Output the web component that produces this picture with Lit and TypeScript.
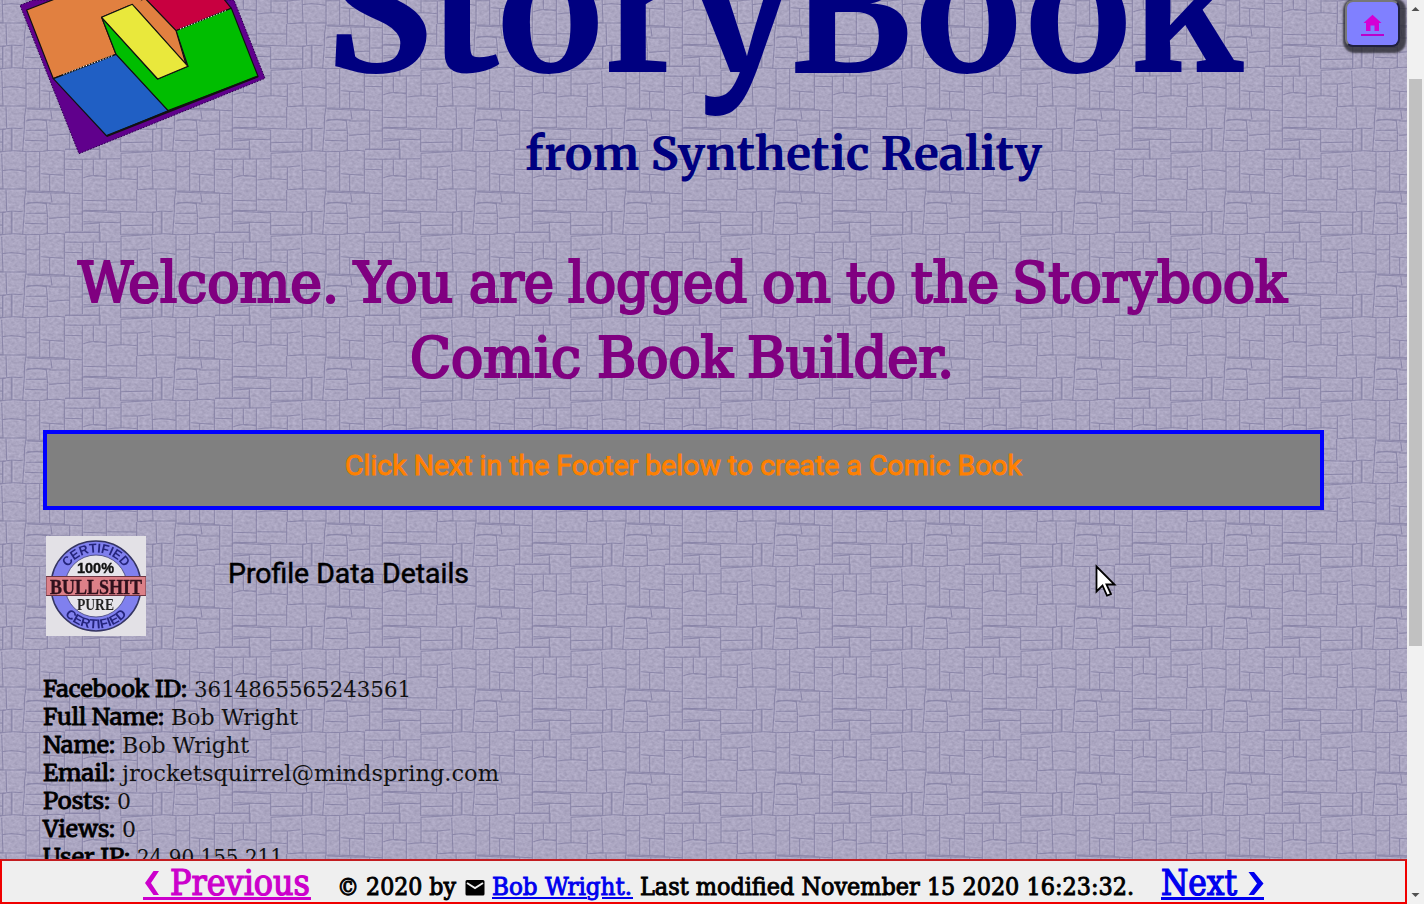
import { LitElement, html, svg, css, unsafeCSS } from "lit";
import { customElement } from "lit/decorators.js";

/* One paving tile: 450 x 249 drawing units, shown at 150 x 83 px. */
const joints = [
  "M0 81Q40 74 78 80L130 79Q160 72 195 79", "M5 137Q40 131 76 139", "M78 82L78 194", "M80 125H118", "M78 197L192 201", "M119 80V199",
  "M122 146L190 151", "M149 150V197", "M193 78V203", "M195 73H300V102", "M195 102L250 103L360 101", "M195 133L246 134", "M195 203L248 207",
  "M247 103V256", "M280 103V150", "M283 153L318 152", "M250 158Q280 146 317 156", "M319 102V258", "M250 226L317 228", "M250 256L317 257",
  "M322 165Q365 158 410 164", "M363 88V160", "M365 126L412 126L450 122", "M412 127V194", "M322 224L408 225", "M410 195V258",
  "M322 258L410 261L467 262", "M413 194L458 191L530 192", "M455 86L459 191", "M362 85L455 80",
  "M18 194L20 258", "M78 194Q72 225 73 258L68 328", "M82 201L160 204L212 205", "M82 232L152 234M152 204L156 232", "M77 237Q110 230 139 237L143 277",
  "M146 237L208 236", "M77 265H140", "M147 280L208 276", "M75 295L140 297", "M142 278V328", "M209 205V325", "M212 205L247 206V318",
  "M212 267H247", "M8 262L36 258L68 260", "M8 262V324", "M34 260V326", "M248 258L362 264", "M250 290L362 293", "M250 297L300 294", "M298 294V350",
  "M362 264V330", "M362 302L456 300", "M362 328L456 328", "M458 262V330", "M486 260V326", "M195 322H298",
].join("");

const tile = `<svg xmlns='http://www.w3.org/2000/svg' width='150' height='83' viewBox='0 0 450 249'>
<defs><path id='j' d='${joints}'/><g id='r'><use href='#j' x='-450'/><use href='#j'/><use href='#j' x='450'/></g><g id='a'><use href='#r' y='-327'/><use href='#r' y='-78'/><use href='#r' y='171'/></g>
<filter id='n' x='0' y='0' width='100%' height='100%' color-interpolation-filters='sRGB'><feTurbulence type='fractalNoise' baseFrequency='.09 .12' numOctaves='2' seed='7' stitchTiles='stitch'/><feColorMatrix values='.15 0 0 0 .598 .15 0 0 0 .578 .14 0 0 0 .69 0 0 0 0 1'/></filter></defs>
<rect width='450' height='249' fill='#aaa5c0'/><rect width='450' height='249' filter='url(#n)'/>
<use href='#a' fill='none' stroke='#bfbad3' stroke-width='3' transform='translate(4 4)' opacity='.35'/>
<use href='#a' fill='none' stroke='#77739a' stroke-width='3.2' opacity='.66'/></svg>`;
const tileUrl = `url("data:image/svg+xml,${encodeURIComponent(tile)}")`;

/* A run of text stretched to a known advance, with its baseline at y. */
const run = (cls: string, x: number, y: number, w: number, text: string) =>
  svg`<text class=${cls} x=${x} y=${y} textLength=${w} lengthAdjust="spacingAndGlyphs">${text}</text>`;

/* Words of one line, each given as [x, width, word]. */
const words = (cls: string, y: number, list: [number, number, string][]) =>
  list.map(([x, w, t]) => run(cls, x, y, w, t));

@customElement("story-logo")
export class StoryLogo extends LitElement {
  static styles = css`
    :host { display: block; width: 300px; height: 170px; }
    svg { display: block; }
    .edge { stroke: #111; stroke-width: 3.5; stroke-linejoin: round; }
    .dots { stroke: #fff; stroke-width: 3; stroke-dasharray: 4 5; fill: none; }
    .rim { stroke: #2b0050; stroke-width: 3; stroke-dasharray: 5 4; }
  `;
  render() {
    return html`<svg width="300" height="170" viewBox="0 0 900 510">
      <path class="rim" fill="#60008c" d="M100 0L60 16L237 461L795 235L702 0Z" />
      <path class="edge" fill="#e18040" d="M170 -5L80 30L160 236L348 163L305 52L397 13L555 193L528 92L435 -5Z" />
      <path class="edge" fill="#c80040" d="M435 -5L528 92L694 25L670 -5Z" />
      <path class="edge" fill="#00bd00" d="M305 52L348 163L504 332L774 229L694 25L528 92L564 199L473 237Z" />
      <path class="edge" fill="#205fc4" d="M160 236L348 163L504 332L320 408Z" />
      <path class="edge" fill="#e18040" d="M397 13L435 -5L528 92L558 193Z" />
      <path fill="#e18040" d="M380 -5H430L405 20L385 14Z" />
      <path class="edge" fill="#e9e83c" d="M305 52L397 13L564 199L473 237Z" />
      <path class="dots" d="M190 223L340 166M540 87L680 31" />
      <path fill="none" stroke="#111" stroke-width="6" d="M320 408L774 229" />
    </svg>`;
  }
}

@customElement("quality-seal")
export class QualitySeal extends LitElement {
  static styles = css`
    :host { display: block; width: 100px; height: 100px; }
    svg { display: block; background: #e3e1e6; }
    .soft { filter: blur(.4px); }
    .arc { font: bold 13px "Liberation Sans", sans-serif; fill: #24247c; }
    .num { font: bold 15px "Liberation Sans", sans-serif; fill: #111; stroke: #111; stroke-width: .4px; }
    .pure { font: bold 17px "Liberation Serif", serif; fill: #222; }
    .band { font: bold 22px "Liberation Serif", serif; fill: #30101c; stroke: #30101c; stroke-width: .4px; }
  `;
  render() {
    return html`<svg width="100" height="100" viewBox="0 0 100 100">
      <defs>
        <path id="top" d="M16.500 50A33.500 33.500 0 0 1 83.500 50" />
        <path id="bottom" d="M7.500 50A42.500 42.500 0 0 0 92.500 50" />
      </defs>
      <g class="soft">
        <circle cx="50" cy="50" r="45" fill="#8080ee" stroke="#343462" stroke-width="1.500" />
        <circle cx="50" cy="50" r="31" fill="#e6e4ea" stroke="#55558c" />
        <text class="arc"><textPath href="#top" startOffset="50%" text-anchor="middle" textLength="66" lengthAdjust="spacingAndGlyphs">CERTIFIED</textPath></text>
        <text class="arc"><textPath href="#bottom" startOffset="50%" text-anchor="middle" textLength="70" lengthAdjust="spacingAndGlyphs">CERTIFIED</textPath></text>
        ${run("num", 31, 37, 37, "100%")}
        ${run("pure", 31, 73.5, 37, "PURE")}
        <rect x="0" y="40.500" width="100" height="19" fill="#dc8088" stroke="#6b3542" />
        ${run("band", 4, 57.5, 92, "BULLSHIT")}
      </g>
    </svg>`;
  }
}

const details: [string, number, string, number][] = [
  ["Facebook ID:", 144, "3614865565243561", 217],
  ["Full Name:", 121, "Bob Wright", 127],
  ["Name:", 72, "Bob Wright", 127],
  ["Email:", 72, "jrocketsquirrel@mindspring.com", 377],
  ["Posts:", 67, "0", 14],
  ["Views:", 72, "0", 14],
  ["User IP:", 87, "24.90.155.211", 146],
];

@customElement("app-root")
export class AppRoot extends LitElement {
  static styles = css`
    :host { display: grid; grid-template-columns: 1407px 17px; width: 1424px; height: 904px; overflow: hidden; position: relative; }
    svg { display: block; flex: none; overflow: visible; }
    .view { display: grid; grid-template-rows: 859px 45px; height: 904px; }
    .page { background: ${unsafeCSS(tileUrl)} 0 68px / 150px 83px; overflow: hidden; }
    .head { display: flex; height: 200px; }
    .serif, .title, .sub { font-family: Merriweather, "DejaVu Serif Condensed", "DejaVu Serif", serif; }
    .title { font-size: 173px; font-weight: bold; fill: #000080; }
    .sub { font-size: 46px; font-weight: bold; fill: #000080; }
    .slab { font-family: "Roboto Slab", "DejaVu Serif Condensed", "DejaVu Serif", serif; }
    .welcome { font-size: 55.5px; fill: #800080; stroke: #800080; stroke-width: 2.2px; }
    .hint { box-sizing: border-box; width: 1281px; height: 80px; margin: 30px 0 26px 43px; border: 4px solid #0000ff; background: #808080; }
    .roboto { font-family: Roboto, sans-serif; font-size: 28px; stroke-width: .9px; }
    .orange { fill: #ff8000; stroke: #ff8000; }
    .black { fill: #000; stroke: #000; stroke-width: .5px; }
    .profile { display: flex; gap: 82px; margin-left: 46px; height: 139px; }
    .row { display: flex; gap: 7px; height: 28px; margin-left: 43px; }
    .value { font-size: 23px; font-family: "DejaVu Serif Condensed", "DejaVu Serif", serif; fill: #111; }
    .label { font-size: 22.5px; fill: #000; stroke: #000; stroke-width: .8px; }
    .footer { box-sizing: border-box; display: flex; border: 2px solid #f00000; border-top-color: #c31c20; background: #efefef; padding-left: 141px; }
    .big { font-size: 34.5px; stroke-width: 1.2px; }
    .note { font-size: 24.5px; fill: #000; stroke: #000; stroke-width: .9px; }
    .prev { fill: #cc00cc; stroke: #cc00cc; }
    .link { fill: #0000ee; stroke: #0000ee; }
    .bar { display: flex; flex-direction: column; background: #f1f1f1; }
    .thumb { width: 13px; height: 567px; margin: 62px 2px auto; background: #c1c1c1; }
    .home { position: absolute; left: 1345px; top: 0; box-sizing: border-box; width: 55px; height: 47px; border: 2px solid; border-color: #777 #202040 #202040 #777; border-radius: 8px; background: #8080ff; box-shadow: 2px 2px 2px 4px rgba(40, 40, 48, .8); }
    .cursor { position: absolute; left: 1095px; top: 565px; }
  `;
  render() {
    return html`
      <div class="view">
        <main class="page">
          <div class="head">
            <story-logo></story-logo>
            <svg width="1000" height="200">
              ${run("title", 25, 72, 919, "StoryBook")}
              ${run("sub", 225, 170, 517, "from Synthetic Reality")}
            </svg>
          </div>
          <svg width="1407" height="200">
            ${words("slab welcome", 102, [[78, 261, "Welcome."], [354, 99, "You"], [469, 85, "are"], [568, 179, "logged"], [762, 69, "on"], [846, 50, "to"], [911, 88, "the"], [1012, 275, "Storybook"]])}
            ${words("slab welcome", 177, [[410, 171, "Comic"], [597, 136, "Book"], [747, 207, "Builder."]])}
          </svg>
          <div class="hint">
            <svg width="1273" height="72">${run("roboto orange", 298, 41, 677, "Click Next in the Footer below to create a Comic Book")}</svg>
          </div>
          <section class="profile">
            <quality-seal></quality-seal>
            <svg width="300" height="100">${run("roboto black", 0, 47, 241, "Profile Data Details")}</svg>
          </section>
          ${details.map(([label, lw, value, vw]) => html`<div class="row">
            <svg width=${lw} height="28">${run("serif label", 0, 22, lw, label)}</svg>
            <svg width=${vw} height="28">${run("value", 0, 22, vw, value)}</svg>
          </div>`)}
        </main>
        <footer class="footer">
          <svg width="1130" height="41">
            <path d="M2 22L10.500 10H16L8 22L16 34H10.500Z" fill="#cc00cc" />
            ${run("slab big prev", 27, 34, 140, "Previous")}
            <path d="M0 36H168V39H0Z" fill="#cc00cc" />
            ${run("slab note", 194, 34, 119, "© 2020 by")}
            <path fill="#000" d="M323 19H340Q341.500 19 341.500 20.500V33Q341.500 34.500 340 34.500H324Q322.500 34.500 322.500 33V20.500Q322.500 19 324 19Z" />
            <path fill="none" stroke="#efefef" stroke-width="2" d="M324 22L332 27L340 22" />
            ${run("slab note link", 349, 34, 140, "Bob Wright.")}
            <path d="M349 37H444M459 37H490" stroke="#0000ee" stroke-width="2" />
            ${run("slab note", 497, 34, 494, "Last modified November 15 2020 16:23:32.")}
            ${run("slab big link", 1018, 34, 76, "Next")}
            <path d="M1105.500 11H1111L1120.500 22.500L1111 34H1105.500L1114 22.500Z" fill="#0000ee" />
            <path d="M1018 36H1121V39H1018Z" fill="#0000ee" />
          </svg>
        </footer>
      </div>
      <aside class="bar">
        <svg width="17" height="17"><path d="M4.500 11L8.500 7L12.500 11Z" fill="#505050" /></svg>
        <div class="thumb"></div>
        <svg width="17" height="17"><path d="M4.500 6L8.500 10L12.500 6Z" fill="#505050" /></svg>
      </aside>
      <div class="home">
        <svg width="51" height="43">
          <path fill="#d400d4" d="M25.500 12.800L34.500 21H32V29H27.500V23.500H23.500V29H19V21H16.500Z" />
          <path fill="#bb00cc" d="M14 32H37V34H14Z" />
        </svg>
      </div>
      <svg class="cursor" width="22" height="34">
        <path d="M1.500 1.500V26.500L7.500 20.500L12 30.500L16 29L11.500 19.500H19.500Z" fill="#fff" />
        <path d="M1.500 1.500L19.500 19.500H11.500L16 29L12 30.500L7.500 20.500L1.500 26.500Z" fill="none" stroke="#000" stroke-width="1.800" />
      </svg>`;
  }
}
